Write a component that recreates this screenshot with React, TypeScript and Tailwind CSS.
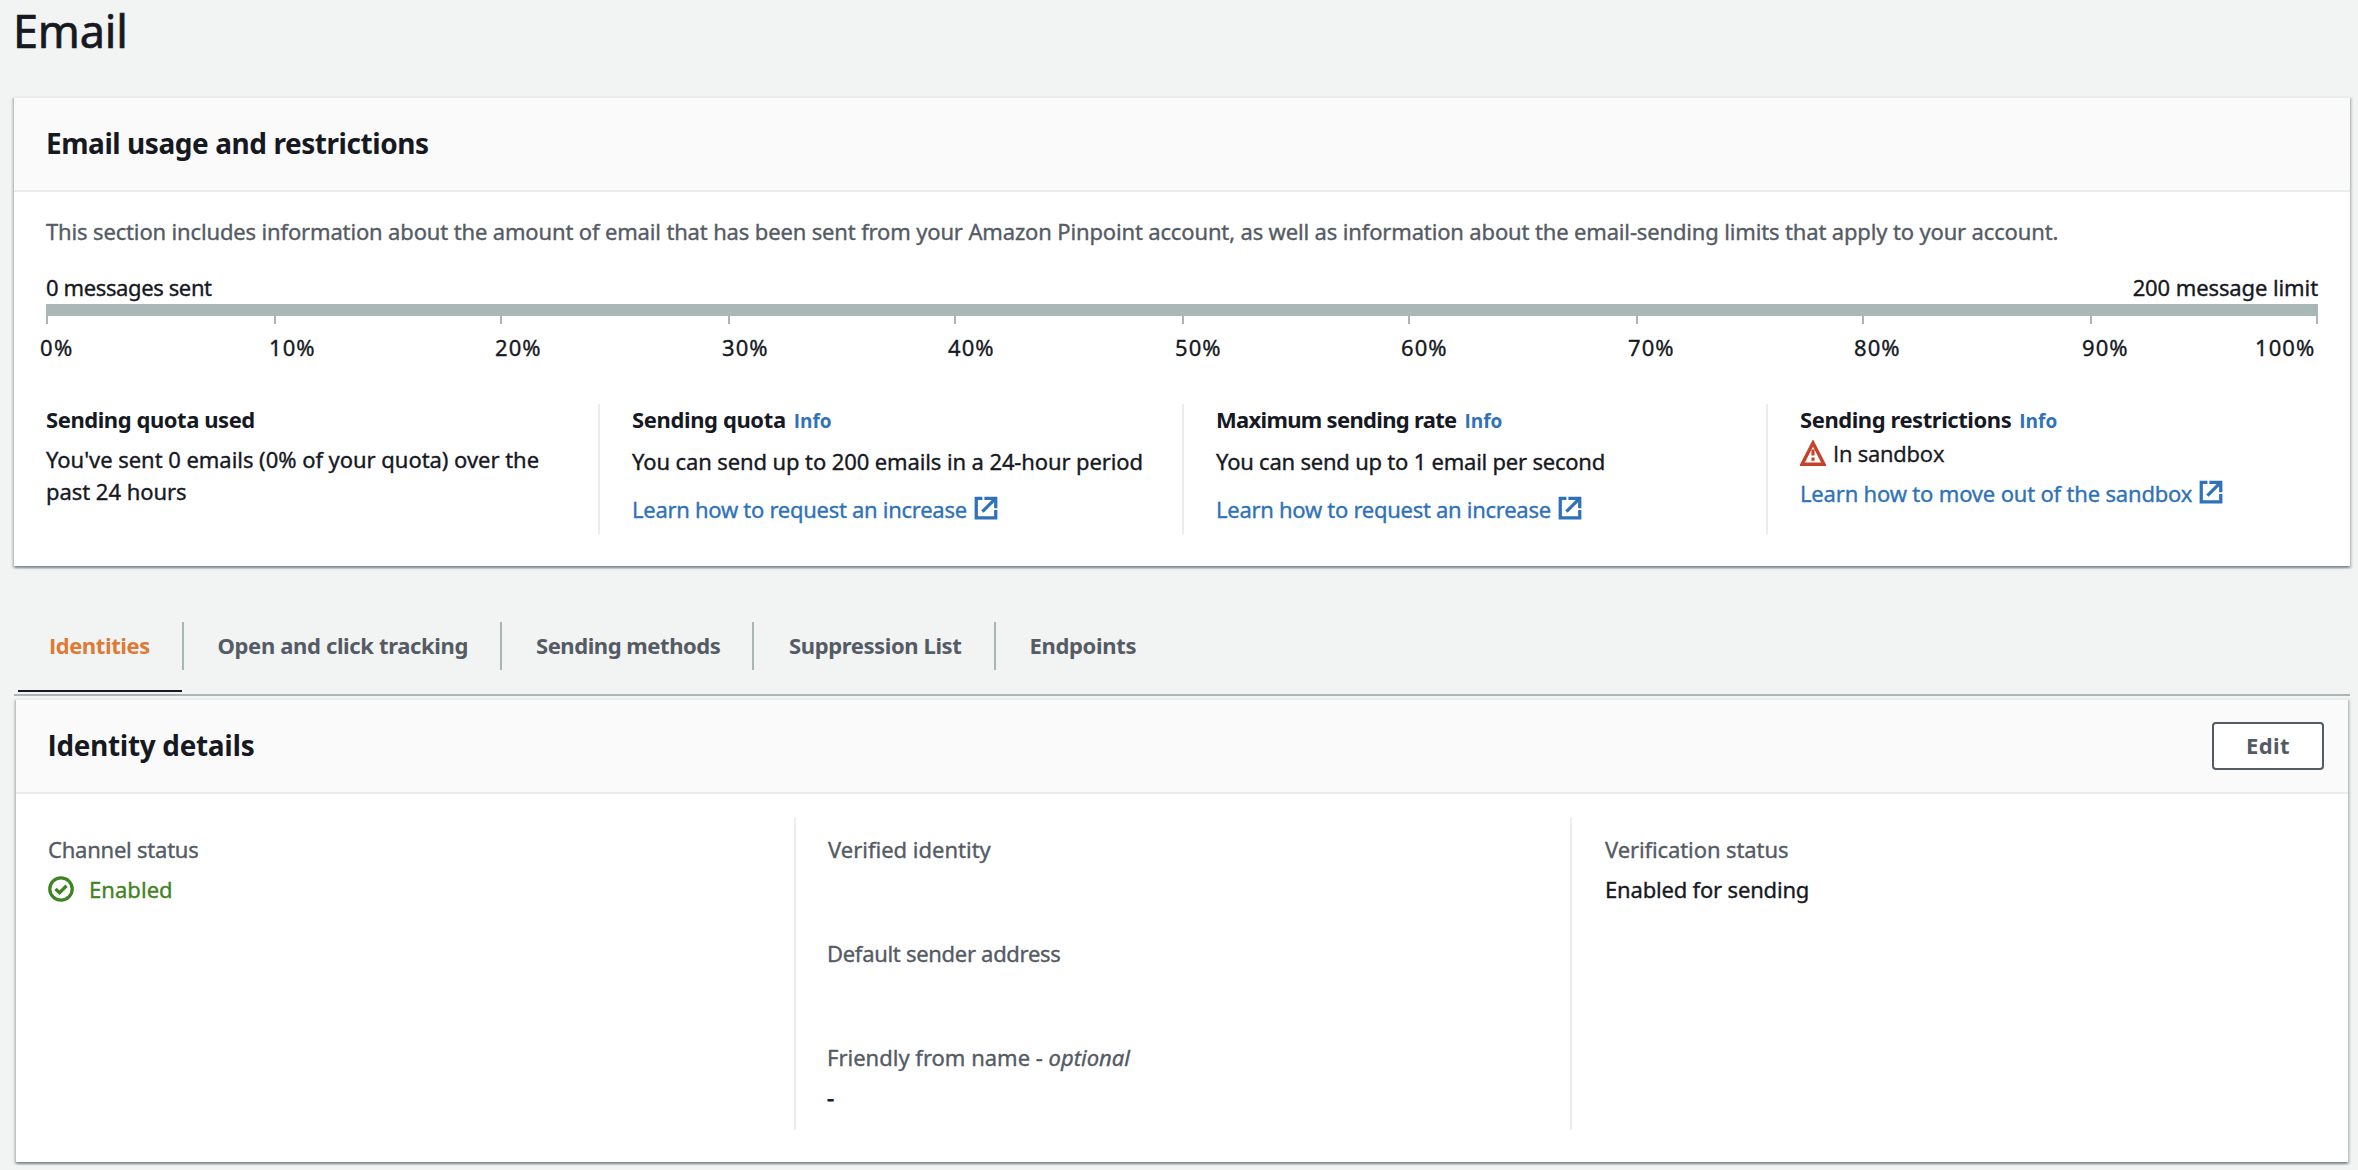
import type { ReactNode } from "react";

function ExternalIcon() {
  return (
    <svg className="mb-0.5 ml-1.5 size-[26px] shrink-0" viewBox="0 0 16 16" fill="none" stroke="currentColor" strokeWidth="2">
      <path d="M5.8 2H2v12h12V9.3" />
      <path d="M7 2h7v6.1" />
      <path d="M5.8 10.2l8-8" />
    </svg>
  );
}

function WarningIcon() {
  return (
    <svg className="size-[26px] shrink-0 text-[#c4432a]" viewBox="0 0 16 16" fill="none" stroke="currentColor">
      <path d="M8 1.8l6.7 13.1H1.3z" strokeWidth="2.1" />
      <path d="M8 5.8v3.8M8 10.8v1.9" strokeWidth="1.9" />
    </svg>
  );
}

function CheckIcon() {
  return (
    <svg className="size-[26px] shrink-0" viewBox="0 0 16 16" fill="none" stroke="currentColor" strokeWidth="2">
      <circle cx="8" cy="8" r="6.9" />
      <path d="M4.6 8l2.5 2.3L11.4 6" />
    </svg>
  );
}

function Link({ children, className }: { children: ReactNode; className: string }) {
  return (
    <a className={"flex items-center text-[#2f72b9] " + className}>
      {children}
      <ExternalIcon />
    </a>
  );
}

function ColumnTitle({ children, className, info }: { children: ReactNode; className: string; info?: boolean }) {
  return (
    <div className="flex h-[30px] items-baseline font-bold leading-[30px] [-webkit-text-stroke:0px]">
      <span className={className}>{children}</span>
      {info && <a className="ml-2 font-['Open_Sans',sans-serif] text-[19px] leading-[26px] text-[#2f72b9]">Info</a>}
    </div>
  );
}

function Field({ label, className, children }: { label: ReactNode; className: string; children?: ReactNode }) {
  return (
    <div className="h-[72px]">
      <div className={"text-[#545b64] " + className}>{label}</div>
      <div className="mt-2">{children}</div>
    </div>
  );
}

const cardShadow =
  "shadow-[0_2px_2px_0_rgba(0,28,36,0.3),2px_2px_2px_0_rgba(0,28,36,0.15),-2px_2px_2px_0_rgba(0,28,36,0.15)]";

const labels = ["10%", "20%", "30%", "40%", "50%", "60%", "70%", "80%", "90%", "100%"];
const scaleColumns = "grid grid-cols-[228px_226px_228px_226px_228px_226px_228px_226px_228px_226px_2px]";
const labelColumns =
  "grid grid-cols-[229px_226px_227px_226px_227px_226px_227px_226px_228px_173px_62px]";

const tabs = [
  { name: "Open and click tracking", className: "w-[318px] pl-[33.5px] tracking-[-0.35px]" },
  { name: "Sending methods", className: "w-[252px] pl-[34px] tracking-[-0.45px]" },
  { name: "Suppression List", className: "w-[242px] pl-[35px] tracking-[-0.39px]" },
  { name: "Endpoints", className: "w-[160px] pl-[33.5px] tracking-[-0.33px]" },
];

export default function App() {
  return (
    <div className="h-[1170px] w-[2358px] overflow-hidden bg-[#f2f3f3] pl-3.5 pr-2 font-['Noto_Sans',sans-serif] text-[22px] leading-8 text-[#16191f] [-webkit-text-stroke:0.35px]">
      <h1 className="-ml-px pt-[3px] text-[45px] leading-[56px] tracking-[-0.2px] [-webkit-text-stroke:0.7px]">Email</h1>

      <section className={"mt-[37px] h-[470px] border-t-2 border-[#eaeded] bg-white " + cardShadow}>
        <header className="flex h-[94px] items-center border-b-2 border-[#eaeded] bg-[#fafafa] pb-0.5 pl-8">
          <h2 className="text-[28px] font-bold leading-[38px] tracking-[-0.44px] [-webkit-text-stroke:0px]">
            Email usage and restrictions
          </h2>
        </header>
        <div className="pl-8 pr-8 pt-[23px]">
          <p className="whitespace-nowrap tracking-[-0.15px] text-[#545b64]">
            This section includes information about the amount of email that has been sent from your Amazon Pinpoint
            account, as well as information about the email-sending limits that apply to your account.
          </p>
          <div className="mt-6 flex justify-between">
            <span className="tracking-[-0.38px]">0 messages sent</span>
            <span className="tracking-[-0.1px]">200 message limit</span>
          </div>
          <div className="mt-px h-3 bg-[#abb6b6]" />
          <div className={scaleColumns}>
            <div className="h-2 border-l-2 border-[#abb6b6]" />
            {labels.map((label) => (
              <div key={label} className="h-2 border-l-2 border-[#abb6b6]" />
            ))}
          </div>
          <div className={"-ml-1.5 mt-[7px] " + labelColumns}>
            <span className="tracking-[1.5px]">0%</span>
            {labels.map((label) => (
              <span key={label} className="tracking-[1.1px]">
                {label}
              </span>
            ))}
          </div>
        </div>
        <div className="mt-[41px] grid h-[130px] grid-cols-4">
          <div className="pl-8 pr-8">
            <ColumnTitle className="tracking-[-0.44px]">Sending quota used</ColumnTitle>
            <p className="mt-[9px] tracking-[-0.04px]">You've sent 0 emails (0% of your quota) over the past 24 hours</p>
          </div>
          <div className="border-l-2 border-[#eaeded] pl-8">
            <ColumnTitle className="tracking-[-0.38px]" info>
              Sending quota
            </ColumnTitle>
            <p className="mt-[11px] tracking-[-0.11px]">You can send up to 200 emails in a 24-hour period</p>
            <Link className="mt-4 tracking-[-0.28px]">Learn how to request an increase</Link>
          </div>
          <div className="border-l-2 border-[#eaeded] pl-8">
            <ColumnTitle className="tracking-[-0.69px]" info>
              Maximum sending rate
            </ColumnTitle>
            <p className="mt-[11px] tracking-[-0.22px]">You can send up to 1 email per second</p>
            <Link className="mt-4 tracking-[-0.28px]">Learn how to request an increase</Link>
          </div>
          <div className="border-l-2 border-[#eaeded] pl-8">
            <ColumnTitle className="tracking-[-0.44px]" info>
              Sending restrictions
            </ColumnTitle>
            <p className="mt-[3px] flex items-center">
              <WarningIcon />
              <span className="ml-[7px] font-['Open_Sans',sans-serif] tracking-[-0.2px]">In sandbox</span>
            </p>
            <Link className="mt-2 tracking-[-0.18px]">Learn how to move out of the sandbox</Link>
          </div>
        </div>
      </section>

      <nav className="mt-[54px] flex h-[76px] items-start border-b-2 border-[#abb6b6] pl-1 pt-0.5 font-bold text-[#545b64] [-webkit-text-stroke:0px]">
        <div className="w-[164px]">
          <div className="flex h-12 items-center pb-0.5 pl-[31px] font-['Open_Sans',sans-serif] tracking-[-0.45px] text-[#dd7a35]">
            Identities
          </div>
          <div className="mt-5 h-0.5 bg-[#16191f]" />
        </div>
        {tabs.map((tab) => (
          <div
            key={tab.name}
            className={"flex h-12 items-center whitespace-nowrap border-l-2 border-[#abb6b6] pb-0.5 " + tab.className}
          >
            {tab.name}
          </div>
        ))}
      </nav>

      <section className={"mx-0.5 mt-0.5 h-[464px] border-t-2 border-[#eaeded] bg-white " + cardShadow}>
        <header className="flex h-[94px] items-center justify-between border-b-2 border-[#eaeded] bg-[#fafafa] pl-[31.5px] pr-6 [-webkit-text-stroke:0px]">
          <h2 className="pb-0.5 font-['Open_Sans',sans-serif] text-[28px] font-bold leading-[38px] tracking-[-0.35px]">
            Identity details
          </h2>
          <button className="flex h-12 w-28 items-center justify-center rounded-[4px] border-2 border-[#545b64] bg-white pb-0.5 font-bold tracking-[0.4px] text-[#545b64]">
            Edit
          </button>
        </header>
        <div className="grid grid-cols-[778px_776px_1fr] pt-6">
          <div className="h-[312px] pl-8 pt-[15px]">
            <Field label="Channel status" className="tracking-[-0.23px]">
              <div className="flex items-center text-[#3f8424]">
                <CheckIcon />
                <span className="ml-[15px] tracking-[0.05px]">Enabled</span>
              </div>
            </Field>
          </div>
          <div className="flex flex-col gap-8 border-l-2 border-[#eaeded] pl-[31px] pt-[15px]">
            <Field label="Verified identity" className="pl-px" />
            <Field label="Default sender address" className="tracking-[-0.3px]" />
            <Field
              label={
                <>
                  Friendly from name - <i>optional</i>
                </>
              }
              className=""
            >
              <span className="[-webkit-text-stroke:0.8px]">-</span>
            </Field>
          </div>
          <div className="border-l-2 border-[#eaeded] pl-[33px] pt-[15px]">
            <Field label="Verification status" className="tracking-[-0.1px]">
              <span className="tracking-[-0.18px]">Enabled for sending</span>
            </Field>
          </div>
        </div>
      </section>
    </div>
  );
}
